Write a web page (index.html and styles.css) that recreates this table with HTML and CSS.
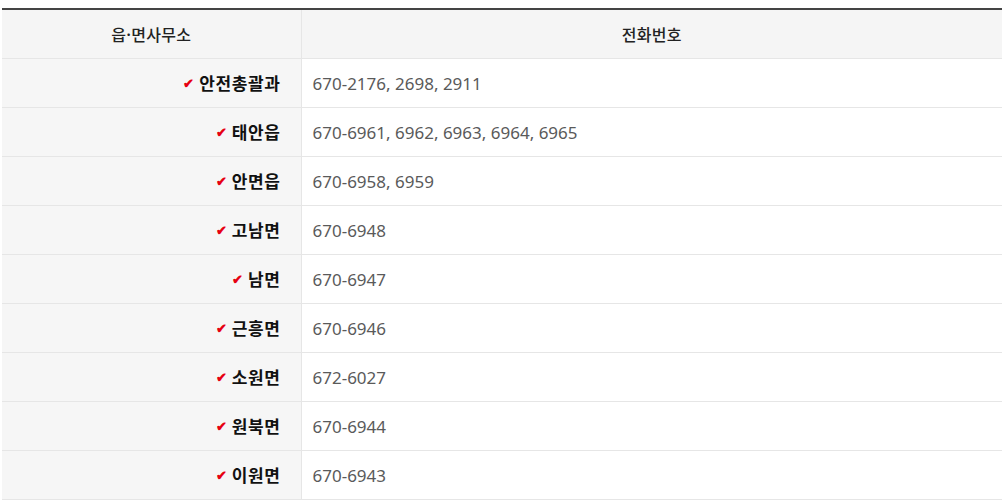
FILE: index.html
```html
<!DOCTYPE html>
<html lang="ko">
<head>
<meta charset="utf-8">
<link rel="stylesheet" href="styles.css">
</head>
<body>
<table class="tel-table">
  <thead>
    <tr><th class="col-office">읍·면사무소</th><th class="col-tel">전화번호</th></tr>
  </thead>
  <tbody>
    <tr><th><span class="chk">✔</span>안전총괄과</th><td>670-2176, 2698, 2911</td></tr>
    <tr><th><span class="chk">✔</span>태안읍</th><td>670-6961, 6962, 6963, 6964, 6965</td></tr>
    <tr><th><span class="chk">✔</span>안면읍</th><td>670-6958, 6959</td></tr>
    <tr><th><span class="chk">✔</span>고남면</th><td>670-6948</td></tr>
    <tr><th><span class="chk">✔</span>남면</th><td>670-6947</td></tr>
    <tr><th><span class="chk">✔</span>근흥면</th><td>670-6946</td></tr>
    <tr><th><span class="chk">✔</span>소원면</th><td>672-6027</td></tr>
    <tr><th><span class="chk">✔</span>원북면</th><td>670-6944</td></tr>
    <tr><th><span class="chk">✔</span>이원면</th><td>670-6943</td></tr>
  </tbody>
</table>
</body>
</html>
```
FILE: styles.css
```css
html, body {
  margin: 0;
  padding: 0;
  background: #fff;
}
body {
  padding: 8px 4px 0 2px;
  font-family: "Noto Sans CJK KR", "Noto Sans", sans-serif;
}
.tel-table {
  width: 1000px;
  border-collapse: collapse;
  border-top: 2px solid #444;
  table-layout: fixed;
}
.tel-table th,
.tel-table td {
  height: 49px;
  padding: 0;
  border-bottom: 1px solid #e6e6e6;
  box-sizing: border-box;
}
.tel-table thead th {
  background: #f5f5f5;
  font-size: 16px;
  font-weight: 500;
  color: #222;
  text-align: center;
  letter-spacing: 0.3px;
}
.tel-table thead th.col-office {
  width: 299px;
  border-right: 1px solid #e6e6e6;
}
.tel-table tbody th {
  background: #f6f6f6;
  text-align: right;
  padding-right: 20px;
  font-size: 17px;
  font-weight: 700;
  color: #111;
  letter-spacing: 0.6px;
  border-right: 1px solid #e6e6e6;
}
.tel-table tbody td {
  padding-left: 11px;
  padding-top: 1px;
  font-size: 17px;
  color: #5a5a5a;
  font-family: "Noto Sans", "Noto Sans CJK KR", sans-serif;
}
.chk {
  color: #e60012;
  font-size: 13px;
  margin-right: 5px;
  vertical-align: 2px;
  letter-spacing: 0;
}
```
